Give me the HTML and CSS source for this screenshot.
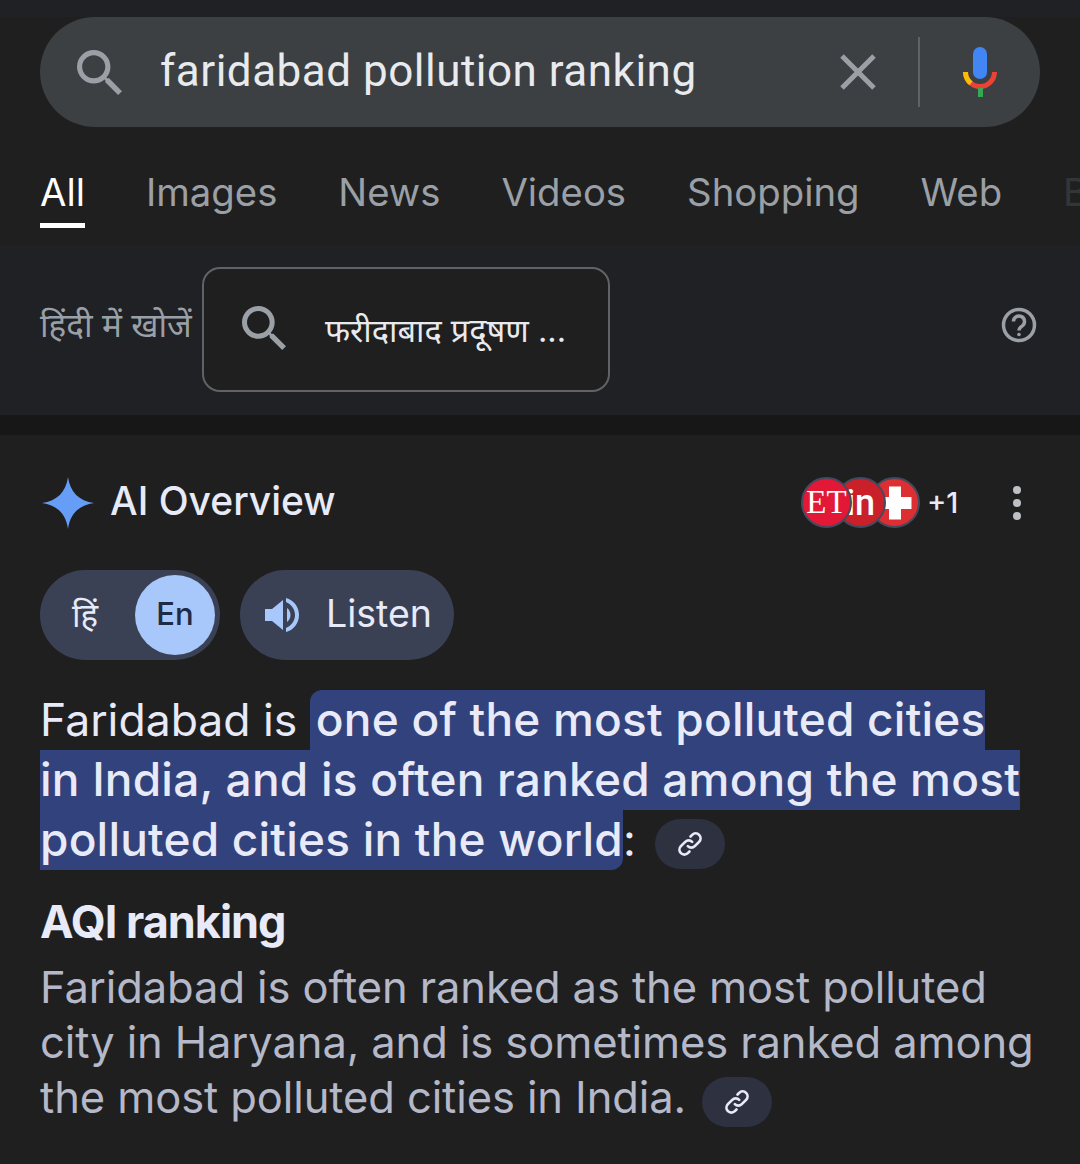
FILE: index.html
```html
<!DOCTYPE html>
<html lang="en">
<head>
  <meta charset="UTF-8">
  <title>faridabad pollution ranking</title>
  <link rel="stylesheet" href="styles.css">
</head>
<body>
  <!-- Search bar -->
  <div class="top">
    <div class="searchbar">
      <svg class="icon-search" viewBox="3 3 17.5 17.5"><path d="M15.5 14h-.79l-.28-.27A6.471 6.471 0 0 0 16 9.5 6.5 6.5 0 1 0 9.5 16c1.61 0 3.09-.59 4.23-1.57l.27.28v.79l5 4.99L20.49 19l-4.99-5zm-6 0C7.01 14 5 11.99 5 9.5S7.01 5 9.5 5 14 7.01 14 9.5 11.99 14 9.5 14z"/></svg>
      <div class="query">faridabad pollution ranking</div>
      <svg class="icon-clear" viewBox="0 0 36 36"><path d="M2 2 34 34M34 2 2 34"/></svg>
      <div class="divider"></div>
      <svg class="icon-mic" viewBox="0 0 36 50">
        <rect x="11" y="0" width="14" height="32" rx="7" fill="#4285f4"/>
        <path d="M3.5 25A14.5 14.5 0 0 0 32.500 25" fill="none" stroke="#ea4335" stroke-width="5"/>
        <path d="M3.500 25A14.500 14.500 0 0 0 9 36.400" fill="none" stroke="#fbbc04" stroke-width="5"/>
        <rect x="16" y="41" width="5" height="9" fill="#34a853"/>
      </svg>
    </div>
  </div>

  <!-- Tabs -->
  <div class="tabs">
    <div class="tab active">All</div>
    <div class="tab">Images</div>
    <div class="tab">News</div>
    <div class="tab">Videos</div>
    <div class="tab">Shopping</div>
    <div class="tab">Web</div>
    <div class="tab faded">Books</div>
  </div>

  <!-- Hindi suggestion -->
  <div class="hindi-band">
    <div class="hindi-label">हिंदी में खोजें</div>
    <div class="hindi-box">
      <svg class="icon-search-small" viewBox="3 3 17.5 17.5"><path d="M15.5 14h-.79l-.28-.27A6.471 6.471 0 0 0 16 9.5 6.5 6.5 0 1 0 9.500 16c1.61 0 3.09-.59 4.23-1.57l.27.28v.79l5 4.99L20.490 19l-4.990-5zm-6 0C7.010 14 5 11.990 5 9.500S7.010 5 9.500 5 14 7.010 14 9.500 11.990 14 9.500 14z"/></svg>
      <div class="hindi-query">फरीदाबाद प्रदूषण ...</div>
    </div>
    <svg class="icon-help" viewBox="0 0 36 36">
      <circle cx="18" cy="18" r="15.500"/>
      <path d="M12.500 14.500a5.500 5.500 0 1 1 8.500 4.600c-2 1.300-3 2.200-3 4.400"/>
      <circle class="dot" cx="18" cy="27.500" r="1.800"/>
    </svg>
  </div>

  <!-- AI Overview -->
  <div class="card">
    <div class="card-head">
      <svg class="icon-spark" viewBox="0 0 52 52"><path d="M26 0C28 15 37 24 52 26 37 28 28 37 26 52 24 37 15 28 0 26 15 24 24 15 26 0Z"/></svg>
      <div class="card-title">AI Overview</div>
      <div class="sources">
        <div class="source source-et">ET</div>
        <div class="source source-in">in</div>
        <div class="source source-plus"><svg viewBox="0 0 24 24"><path d="M8 1h8v7h7v8h-7v7H8v-7H1V8h7z"/></svg></div>
      </div>
      <div class="more-count">+1</div>
      <div class="more-menu"><span></span><span></span><span></span></div>
    </div>

    <div class="controls">
      <div class="lang-toggle">
        <div class="lang-hi">हिं</div>
        <div class="lang-en">En</div>
      </div>
      <div class="listen">
        <svg class="icon-speaker" viewBox="0 0 36 36">
          <path d="M0 12h7L18 3v30L7 24H0z"/>
          <path d="M22 11c2 1.500 3.500 4 3.500 7s-1.500 5.500-3.500 7z"/>
          <path d="M21 1c8 2 13 9 13 17s-5 15-13 17v-4c5-2 9-7 9-13s-4-11-9-13z"/>
        </svg>
        <span>Listen</span>
      </div>
    </div>

    <p class="lead">Faridabad is <span class="mark">one of the most polluted cities<br>in India, and is often ranked among the most<br>polluted cities in the world</span>: <span class="chip"><svg viewBox="0 0 24 24"><path d="M10 14a4.500 4.500 0 0 0 6.400 0l4-4A4.500 4.500 0 0 0 14 3.600l-1.500 1.500M14 10a4.500 4.500 0 0 0-6.400 0l-4 4A4.500 4.500 0 0 0 10 20.400l1.500-1.500"/></svg></span></p>

    <h2 class="section-title">AQI ranking</h2>
    <p class="section-text">Faridabad is often ranked as the most polluted city in Haryana, and is sometimes ranked among the most polluted cities in India. <span class="chip"><svg viewBox="0 0 24 24"><path d="M10 14a4.500 4.500 0 0 0 6.400 0l4-4A4.500 4.500 0 0 0 14 3.600l-1.500 1.500M14 10a4.500 4.500 0 0 0-6.400 0l-4 4A4.500 4.500 0 0 0 10 20.400l1.500-1.500"/></svg></span></p>
  </div>
</body>
</html>
```

FILE: styles.css
```css
body {
  margin: 0;
  height: 1164px;
  overflow: hidden;
  background: #1f1f1f;
  color: #e8eaf7;
  font-family: Inter, "Noto Sans", sans-serif;
}
.top {
  padding-top: 17px;
  background: linear-gradient(#1f2125 0, #1f2125 17px, #1f1f1f 17px);
}
.searchbar {
  height: 110px;
  margin: 0 40px;
  padding: 0 42px 0 37px;
  display: flex;
  align-items: center;
  background: #3c4043;
  border-radius: 55px;
}
.icon-search {
  width: 45px;
  height: 45px;
  fill: #9aa0a6;
}
.query {
  flex: 1;
  margin-left: 38px;
  padding-bottom: 2px;
  font-family: Roboto, sans-serif;
  font-size: 44px;
  letter-spacing: 0.5px;
  color: #e8eaed;
}
.icon-clear {
  width: 36px;
  height: 36px;
  fill: none;
  stroke: #9aa0a6;
  stroke-width: 5;
}
.divider {
  width: 2px;
  height: 70px;
  margin: 0 42px;
  background: #5f6368;
}
.icon-mic {
  width: 36px;
  height: 50px;
}
.tabs {
  height: 118px;
  padding: 0 0 0 40px;
  display: flex;
  gap: 61px;
  overflow: hidden;
}
.tab {
  flex: none;
  padding-top: 40px;
  height: 56px;
  font-size: 38.3px;
  line-height: 50px;
  color: #9aa0a6;
}
.tab.active {
  color: #fff;
  border-bottom: 5px solid #fff;
}
.tab.faded {
  color: #333639;
}
.hindi-band {
  height: 170px;
  padding: 22px 43px 0 40px;
  box-sizing: border-box;
  display: flex;
  align-items: flex-start;
  background: #1f2125;
}
.hindi-label {
  width: 162px;
  margin-top: 33px;
  font-size: 33.3px;
  line-height: 50px;
  color: #9aa0a6;
  white-space: nowrap;
}
.hindi-box {
  width: 408px;
  height: 125px;
  box-sizing: border-box;
  display: flex;
  align-items: center;
  padding-left: 38px;
  background: #1f1f1f;
  border: 2px solid #5f6368;
  border-radius: 18px;
}
.icon-search-small {
  width: 44px;
  height: 44px;
  margin-top: -4px;
  fill: #9aa0a6;
}
.hindi-query {
  margin-left: 39px;
  font-size: 32.5px;
  color: #e8eaed;
  white-space: nowrap;
}
.icon-help {
  width: 36px;
  height: 36px;
  margin: 40px 0 0 auto;
  fill: none;
  stroke: #9aa0a6;
  stroke-width: 3.500;
}
.icon-help .dot {
  fill: #9aa0a6;
  stroke: none;
}
.card {
  margin-top: 20px;
  padding: 0 40px;
  position: relative;
}
/* the dark gap between the band and the card */
.card::before {
  content: "";
  position: absolute;
  left: 0;
  right: 0;
  top: -20px;
  height: 20px;
  background: #171717;
}
.card-head {
  height: 135px;
  display: flex;
  align-items: center;
}
.icon-spark {
  width: 52px;
  height: 52px;
  margin: 0 0 0 2px;
  fill: #669df6;
}
.card-title {
  flex: 1;
  margin-left: 16px;
  padding-bottom: 4px;
  font-size: 39px;
  font-weight: 500;
  color: #e8eaf7;
}
.sources {
  display: flex;
}
.source {
  width: 51px;
  height: 51px;
  box-sizing: border-box;
  margin-right: -17px;
  display: flex;
  align-items: center;
  justify-content: center;
  border: 2px solid #444a5e;
  border-radius: 50%;
  color: #fff;
  font-weight: bold;
  overflow: hidden;
}
.source-et {
  position: relative;
  z-index: 3;
  background: #e31837;
  font-family: "Liberation Serif", serif;
  font-size: 33px;
  font-weight: normal;
}
.source-in {
  position: relative;
  z-index: 2;
  background: #c9202a;
  font-family: Roboto, sans-serif;
  font-size: 36px;
  font-weight: 500;
}
.source-plus {
  background: #dc2f33;
  margin-right: 0;
}
.source-plus svg {
  flex: none;
  width: 36px;
  height: 36px;
  fill: #fff;
}
.more-count {
  width: 33px;
  margin-left: 7px;
  font-size: 29px;
  font-weight: 500;
  color: #e8eaf7;
}
.more-menu {
  width: 8px;
  margin: 0 19px 0 53px;
  display: flex;
  flex-direction: column;
  gap: 5px;
}
.more-menu span {
  width: 8px;
  height: 8px;
  border-radius: 50%;
  background: #bdc1c6;
}
.controls {
  display: flex;
  gap: 20px;
}
.lang-toggle {
  width: 180px;
  height: 90px;
  box-sizing: border-box;
  padding: 5px;
  display: flex;
  justify-content: space-between;
  background: #3b4155;
  border-radius: 45px;
}
.lang-hi {
  width: 80px;
  font-size: 33px;
  line-height: 80px;
  text-align: center;
}
.lang-en {
  width: 80px;
  height: 80px;
  background: #a8c7fa;
  border-radius: 50%;
  color: #1f2a44;
  font-size: 31px;
  font-weight: 500;
  line-height: 78px;
  text-align: center;
}
.listen {
  width: 214px;
  height: 90px;
  box-sizing: border-box;
  padding-left: 25px;
  display: flex;
  align-items: center;
  background: #3b4155;
  border-radius: 45px;
  font-size: 37.5px;
}
.listen span {
  padding-bottom: 3px;
}
.icon-speaker {
  width: 36px;
  height: 36px;
  margin-right: 25px;
  fill: #a8c7fa;
}
.lead {
  margin: 30px 0 0;
  font-size: 44.5px;
  line-height: 60px;
}
.mark {
  padding: 1px 0 3px 6px;
  background: #32427c;
  border-radius: 12px 0 12px 0;
  font-size: 46px;
  line-height: 58px;
  font-weight: 500;
  letter-spacing: 0.2px;
}
.chip {
  display: inline-flex;
  width: 70px;
  height: 50px;
  margin-left: 4px;
  align-items: center;
  justify-content: center;
  vertical-align: -2px;
  background: #2d3140;
  border-radius: 25px;
}
.lead .chip {
  margin-left: 7px;
  vertical-align: -1px;
}
.chip svg {
  width: 26px;
  height: 26px;
  fill: none;
  stroke: #e8eaf7;
  stroke-width: 2.500;
  stroke-linecap: round;
}
.section-title {
  margin: 22px 0 0;
  font-size: 45px;
  line-height: 60px;
  font-weight: bold;
  letter-spacing: -1px;
  color: #e8eaf7;
}
.section-text {
  margin: 8px 0 0;
  font-size: 43.5px;
  line-height: 55px;
  letter-spacing: -0.1px;
  color: #b4b8c8;
}
```
